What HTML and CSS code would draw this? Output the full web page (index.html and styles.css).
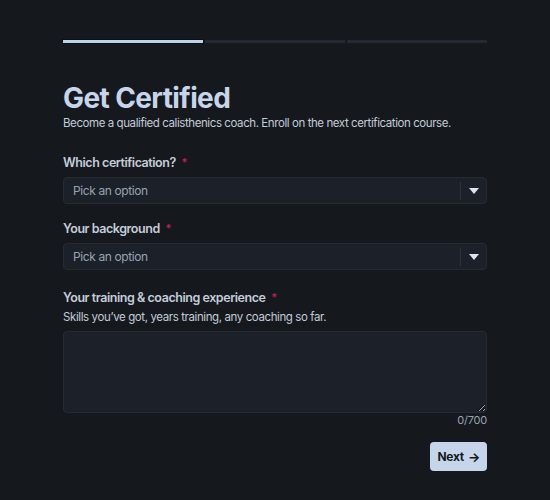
FILE: index.html
```html
<!DOCTYPE html>
<html lang="en">
<head>
<meta charset="utf-8">
<link rel="stylesheet" href="styles.css">
</head>
<body>
<main class="wrap">
  <div class="progress">
    <span class="seg active"></span>
    <span class="seg"></span>
    <span class="seg"></span>
  </div>
  <h1 class="title">Get Certified</h1>
  <p class="subtitle">Become a qualified calisthenics coach. Enroll on the next certification course.</p>

  <div class="field first">
    <label class="label">Which certification? <span class="req">*</span></label>
    <div class="select">
      <span class="placeholder">Pick an option</span>
      <span class="caret"><svg width="10" height="6" viewBox="0 0 10 6"><path d="M0 0h10L5 6z" fill="#dbe4f0"/></svg></span>
    </div>
  </div>

  <div class="field second">
    <label class="label">Your background <span class="req">*</span></label>
    <div class="select">
      <span class="placeholder">Pick an option</span>
      <span class="caret"><svg width="10" height="6" viewBox="0 0 10 6"><path d="M0 0h10L5 6z" fill="#dbe4f0"/></svg></span>
    </div>
  </div>

  <div class="field third">
    <label class="label">Your training &amp; coaching experience <span class="req">*</span></label>
    <p class="desc">Skills you’ve got, years training, any coaching so far.</p>
    <textarea class="textarea"></textarea>
    <div class="count">0/700</div>
  </div>

  <div class="actions">
    <button class="next">Next <span class="arrow">→</span></button>
  </div>
</main>
</body>
</html>
```
FILE: styles.css
```css
* { box-sizing: border-box; }
html, body { margin: 0; padding: 0; background: #15191e; }
body { font-family: Inter, "Noto Sans", sans-serif; color: #c9d3e0; }
.wrap { width: 424px; margin: 0 auto; padding-top: 39px; }
.progress { display: flex; gap: 2px; height: 4px; }
.seg { flex: 1; background: #242a33; height: 3px; margin-top: 1px; }
.seg.active { background: #c0d2ea; height: 3px; box-shadow: 0 0 0 1px #0c0f13; }
.title { margin: 38px 0 0; font-size: 28px; font-weight: 700; color: #c6d5ea; line-height: 34px; letter-spacing: -0.6px; }
.subtitle { margin: -1px 0 0; font-size: 11.5px; line-height: 18px; color: #c2ccd8; letter-spacing: -0.42px; white-space: nowrap; }
.field.first { margin-top: 21px; }
.field.second { margin-top: 15px; }
.field.third { margin-top: 18px; }
.label { display: block; font-size: 12.5px; font-weight: 600; color: #c3cdda; line-height: 18px; letter-spacing: -0.45px; }
.req { color: #d0145e; font-size: 11px; margin-left: 3px; vertical-align: 1px; }
.select { margin-top: 5px; height: 27px; background: #1b2029; border: 1px solid #252b35; border-radius: 4px; display: flex; align-items: center; }
.placeholder { flex: 1; padding-left: 9px; font-size: 12px; color: #98a3b2; letter-spacing: -0.4px; }
.caret { width: 26px; height: 18px; border-left: 1px solid #2c333e; display: flex; align-items: center; justify-content: center; }
.caret svg { display: block; }
.desc { margin: 1px 0 0; font-size: 11.5px; color: #c2ccd8; line-height: 18px; letter-spacing: -0.4px; }
.textarea { display: block; width: 100%; margin-top: 5px; height: 82px; background: #1b2029; border: 1px solid #252b35; border-radius: 4px; resize: vertical; color: #c9d3e0; font-family: inherit; }
.count { text-align: right; font-size: 11px; color: #98a3b2; margin-top: 0; line-height: 14px; letter-spacing: -0.2px; }
.actions { display: flex; justify-content: flex-end; margin-top: 15px; }
.next { height: 29px; padding: 0 7px 0 8px; background: #c6d6ea; color: #15191e; border: none; border-radius: 4px; font-family: inherit; font-weight: 700; font-size: 12px; letter-spacing: -0.3px; display: flex; align-items: center; gap: 4px; }
.arrow { font-size: 13px; }
```
